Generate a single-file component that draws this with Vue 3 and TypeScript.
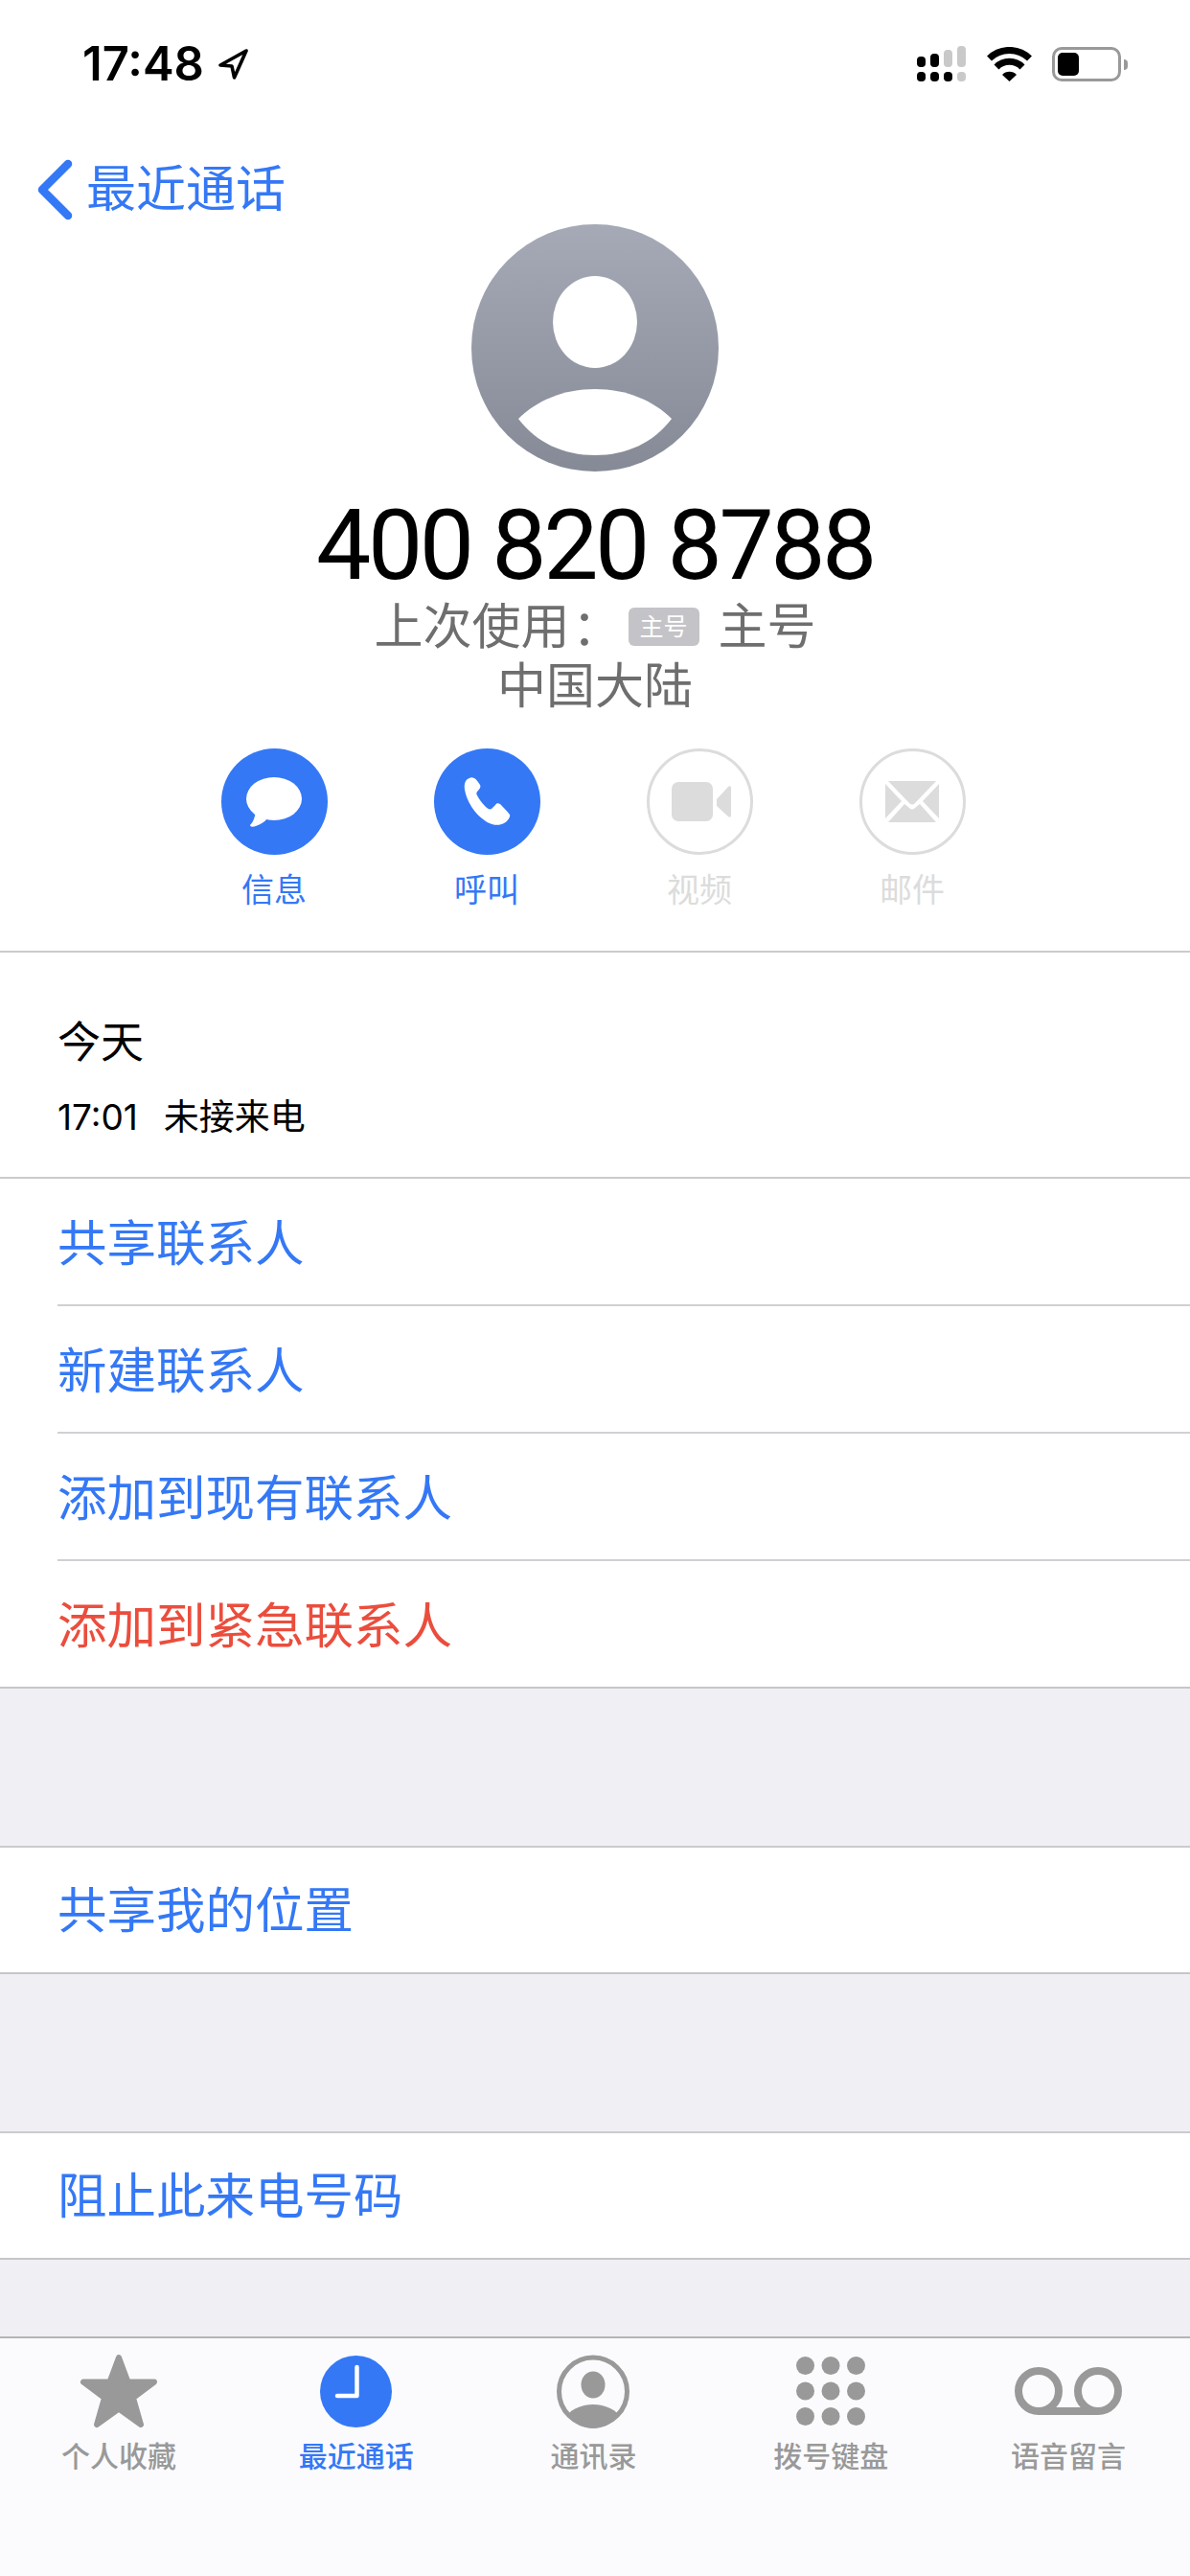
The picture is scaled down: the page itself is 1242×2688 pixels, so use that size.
<script setup lang="ts">
interface RowItem { text: string; danger?: boolean }
const contactRows: RowItem[] = [
  { text: '共享联系人' },
  { text: '新建联系人' },
  { text: '添加到现有联系人' },
  { text: '添加到紧急联系人', danger: true },
]
const tabLabels = ['个人收藏', '最近通话', '通讯录', '拨号键盘', '语音留言']
const keypadX = [9.5, 36, 62.5]
const keypadY = [9.5, 36, 62.5]
</script>

<template>
  <div class="page">
    <header class="status">
      <div class="status-left">
        <span class="time">17:48</span>
        <svg class="arrow" width="32" height="32" viewBox="0 0 32 32">
          <path d="M30 2 L3 17 L15 18 L17.5 30 Z" fill="none" stroke="#000" stroke-width="3.6" stroke-linejoin="round" />
        </svg>
      </div>
      <div class="status-right">
        <svg width="52" height="38" viewBox="0 0 52 38">
          <rect x="0" y="11" width="9" height="11" rx="4" fill="#000" />
          <rect x="14" y="8" width="9" height="14" rx="4" fill="#000" />
          <rect x="28" y="4" width="9" height="18" rx="4" fill="#c9c9c9" />
          <rect x="42" y="0" width="9" height="22" rx="4" fill="#c9c9c9" />
          <rect x="0" y="27" width="9" height="10" rx="4" fill="#000" />
          <rect x="14" y="27" width="9" height="10" rx="4" fill="#000" />
          <rect x="28" y="27" width="9" height="10" rx="4" fill="#000" />
          <rect x="42" y="27" width="9" height="10" rx="4" fill="#c9c9c9" />
        </svg>
        <svg width="47" height="36" viewBox="0 0 47 36">
          <path d="M2.5 12 A30 30 0 0 1 44.5 12" fill="none" stroke="#000" stroke-width="7" />
          <path d="M10 21 A19 19 0 0 1 37 21" fill="none" stroke="#000" stroke-width="7" />
          <path d="M16 29 A10.5 10.5 0 0 1 31 29 L23.5 36 Z" fill="#000" />
        </svg>
        <div class="battery">
          <div class="battery-body"><div class="battery-level"></div></div>
          <div class="battery-nub"></div>
        </div>
      </div>
    </header>

    <nav class="nav">
      <svg width="38" height="64" viewBox="0 0 38 64">
        <path d="M33 5 L6 32 L33 59" fill="none" stroke="#3478f6" stroke-width="8.5" stroke-linecap="round" stroke-linejoin="round" />
      </svg>
      <span class="nav-title">最近通话</span>
    </nav>

    <section class="hero">
      <svg class="avatar" width="258" height="258" viewBox="0 0 258 258">
        <defs>
          <linearGradient id="avatarFill" x1="0" y1="0" x2="0" y2="1">
            <stop offset="0" stop-color="#a6aab7" />
            <stop offset="1" stop-color="#858a96" />
          </linearGradient>
        </defs>
        <circle cx="129" cy="129" r="129" fill="url(#avatarFill)" />
        <ellipse cx="129" cy="102" rx="44" ry="48" fill="#fff" />
        <path d="M49 203 C68 184 96 172 129 172 C162 172 190 184 209 203 C190 228 162 241 129 241 C96 241 68 228 49 203 Z" fill="#fff" />
      </svg>
      <div class="number">400 820 8788</div>
      <div class="sub">
        <span>上次使用</span><span class="colon">：</span><span class="tag">主号</span><span>主号</span>
      </div>
      <div class="sub">中国大陆</div>
      <div class="actions">
        <div class="action on">
          <svg width="111" height="111" viewBox="0 0 111 111">
            <circle cx="55.5" cy="55.5" r="55.5" fill="#3478f6" />
            <ellipse cx="55" cy="52.5" rx="29" ry="22.5" fill="#fff" />
            <path d="M36 66 C35 72 33 77 30 80 C30 82 33 82 36 81 C41 79 45 77 48 73 Z" fill="#fff" />
          </svg>
          <span>信息</span>
        </div>
        <div class="action on">
          <svg width="111" height="111" viewBox="0 0 111 111">
            <circle cx="55.5" cy="55.5" r="55.5" fill="#3478f6" />
            <path d="M37 31 C33 32 31 37 32 43 C34 55 42 68 54 76 C60 80 68 81 73 78 C77 76 80 71 79 69 C76 65 72 61 69 58 C67 57 65 57 64 59 L60 63 C58 64 56 63 54 61 C50 57 47 53 45 49 C44 47 44 46 46 44 C48 42 49 40 48 38 C46 35 44 32 42 31 C40 30 38 30 37 31 Z" fill="#fff" />
          </svg>
          <span>呼叫</span>
        </div>
        <div class="action off">
          <svg width="111" height="111" viewBox="0 0 111 111">
            <circle cx="55.5" cy="55.5" r="54" fill="none" stroke="#dcdcdc" stroke-width="3" />
            <rect x="26" y="35" width="43" height="41" rx="7" fill="#dcdcdc" />
            <path d="M73 53 L85 40 C86 39 88 39 88 41 V70 C88 72 86 72 85 71 L73 60 Z" fill="#dcdcdc" />
          </svg>
          <span>视频</span>
        </div>
        <div class="action off">
          <svg width="111" height="111" viewBox="0 0 111 111">
            <circle cx="55.5" cy="55.5" r="54" fill="none" stroke="#dcdcdc" stroke-width="3" />
            <path d="M30 34 H80 L58 57 Q55 60 52 57 Z" fill="#dcdcdc" />
            <path d="M27 37 L44 55 L27 73 Z" fill="#dcdcdc" />
            <path d="M83 37 L66 55 L83 73 Z" fill="#dcdcdc" />
            <path d="M30 77 L47 58 L52 62 Q55 65 58 62 L63 58 L80 77 Z" fill="#dcdcdc" />
          </svg>
          <span>邮件</span>
        </div>
      </div>
    </section>

    <section class="history">
      <div class="history-day">今天</div>
      <div class="history-line"><span class="history-time">17:01</span><span>未接来电</span></div>
    </section>

    <section class="group">
      <div v-for="row in contactRows" :key="row.text" class="row" :class="{ danger: row.danger }">
        {{ row.text }}
      </div>
    </section>

    <div class="spacer"></div>
    <section class="group single"><div class="row">共享我的位置</div></section>
    <div class="spacer"></div>
    <section class="group single"><div class="row">阻止此来电号码</div></section>
    <div class="fill"></div>

    <footer class="tabs">
      <div v-for="(label, i) in tabLabels" :key="label" class="tab" :class="{ active: i === 1 }">
        <div class="tab-icon">
          <svg v-if="i === 0" width="82" height="78" viewBox="0 0 82 78">
            <polygon points="41,4 50.5,29.5 78,29.5 56,46 64,74 41,57.5 18,74 26,46 4,29.5 31.5,29.5" fill="#999" stroke="#999" stroke-width="6" stroke-linejoin="round" />
          </svg>
          <svg v-else-if="i === 1" width="75" height="75" viewBox="0 0 75 75">
            <circle cx="37.5" cy="37.5" r="37.5" fill="#3478f6" />
            <path d="M38.5 12 V42 H18" fill="none" stroke="#fff" stroke-width="4.5" stroke-linecap="round" stroke-linejoin="round" />
          </svg>
          <svg v-else-if="i === 2" width="76" height="77" viewBox="0 0 76 77">
            <circle cx="38" cy="38.5" r="35.5" fill="none" stroke="#999" stroke-width="5" />
            <ellipse cx="38" cy="31.5" rx="12.5" ry="14" fill="#999" />
            <path d="M11 63 C17 56 27 52 38 52 C49 52 59 56 65 63 C58 72 48 77 38 77 C28 77 18 72 11 63 Z" fill="#999" />
          </svg>
          <svg v-else-if="i === 3" width="72" height="72" viewBox="0 0 72 72">
            <template v-for="y in keypadY" :key="y">
              <circle v-for="x in keypadX" :key="x" :cx="x" :cy="y" r="9.5" fill="#999" />
            </template>
          </svg>
          <svg v-else width="112" height="50" viewBox="0 0 112 50">
            <circle cx="25" cy="25" r="21" fill="none" stroke="#999" stroke-width="8" />
            <circle cx="87" cy="25" r="21" fill="none" stroke="#999" stroke-width="8" />
            <path d="M25 46 H87" fill="none" stroke="#999" stroke-width="8" />
          </svg>
        </div>
        <span class="tab-label">{{ label }}</span>
      </div>
    </footer>
  </div>
</template>

<style>
html, body { margin: 0; padding: 0; background: #fff; }
</style>

<style scoped>
.page {
  width: 1242px;
  height: 2688px;
  display: flex;
  flex-direction: column;
  overflow: hidden;
  background: #fff;
  color: #000;
  font-family: "Inter", "Noto Sans CJK SC", sans-serif;
}
.status {
  height: 134px;
  display: flex;
  align-items: center;
  justify-content: space-between;
  padding: 0 65px 0 86px;
  flex: none;
}
.status-left { display: flex; align-items: center; gap: 14px; }
.time { font-size: 49px; font-weight: 600; line-height: 56px; letter-spacing: 0; }
.status-right { display: flex; align-items: center; gap: 21px; }
.battery { display: flex; align-items: center; gap: 3px; }
.battery-body {
  box-sizing: border-box;
  width: 72px;
  height: 36px;
  border: 3px solid #999;
  border-radius: 10px;
  padding: 3px;
}
.battery-level { width: 22px; height: 100%; background: #000; border-radius: 5px; }
.battery-nub { width: 4px; height: 11px; background: #999; border-radius: 0 4px 4px 0; }
.nav {
  flex: none;
  height: 72px;
  padding: 28px 0 0 38px;
  display: flex;
  align-items: center;
  gap: 14px;
}
.nav-title { font-size: 52px; line-height: 72px; color: #3478f6; }
.hero {
  flex: none;
  display: flex;
  flex-direction: column;
  align-items: center;
  border-bottom: 2px solid #cbcbcf;
  padding-bottom: 43px;
}
.number {
  margin-top: 23px;
  font-family: "Roboto", sans-serif;
  font-size: 102px;
  line-height: 108px;
  font-weight: 400;
  letter-spacing: -3.5px;
}
.sub {
  height: 62px;
  font-size: 51px;
  line-height: 62px;
  color: #6e6e6e;
  display: flex;
  align-items: center;
}
.sub + .sub { margin-bottom: -1px; }
.colon { font-family: "Noto Sans CJK TC", sans-serif; margin-left: -10px; }
.tag {
  box-sizing: border-box;
  width: 74px;
  height: 40px;
  line-height: 40px;
  margin: 0 20px 0 20px;
  border-radius: 6px;
  background: #c4c4c8;
  color: #fff;
  font-size: 25px;
  text-align: center;
}
.actions { margin-top: 35px; display: flex; padding-right: 4px; }
.action {
  width: 222px;
  display: flex;
  flex-direction: column;
  align-items: center;
  font-size: 34px;
  line-height: 44px;
}
.action svg { display: block; }
.action span { margin-top: 15px; margin-bottom: -2px; }
.action.on { color: #3478f6; }
.action.off { color: #dcdcdc; }
.history { flex: none; height: 234px; box-sizing: border-box; padding: 64px 0 0 60px; }
.history-day { font-size: 45px; line-height: 60px; }
.history-line { margin-top: 23px; font-size: 37px; line-height: 50px; display: flex; gap: 27px; }
.group {
  flex: none;
  background: #fff;
  border-top: 2px solid #cbcbcf;
  border-bottom: 2px solid #c6c6ca;
  padding-left: 60px;
  font-size: 51.5px;
  color: #3478f6;
}
.row {
  height: 131px;
  line-height: 134px;
  border-bottom: 2px solid #d0d0d4;
}
.row:last-child { border-bottom: 0; height: 131px; }
.single .row:last-child { height: 130px; line-height: 130px; }
.row.danger { color: #eb4d3d; }
.spacer { flex: none; height: 164px; background: #efeff4; }
.fill { flex: 1; background: #efeff4; }
.tabs {
  flex: none;
  height: 250px;
  box-sizing: border-box;
  border-top: 2px solid #b3b3b8;
  background: #fbfbfd;
  display: grid;
  grid-template-columns: repeat(5, 1fr);
  padding: 12px 3px 0 0;
  align-items: start;
}
.tab { display: flex; flex-direction: column; align-items: center; color: #999; }
.tab.active { color: #3478f6; }
.tab-icon { height: 86px; display: flex; align-items: center; justify-content: center; }
.tab-label { margin-top: 5px; font-size: 30px; line-height: 40px; font-weight: 500; }
</style>
